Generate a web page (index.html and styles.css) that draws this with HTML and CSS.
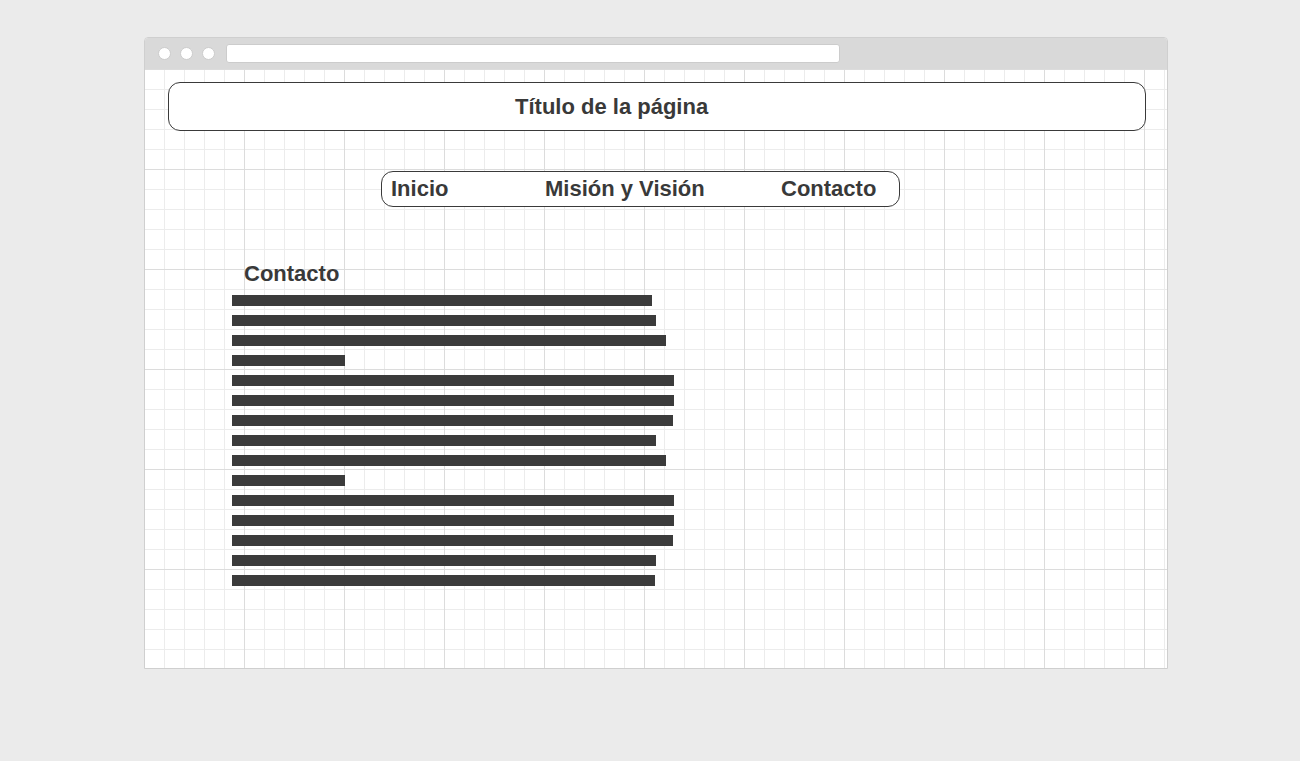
FILE: index.html
```html
<!DOCTYPE html>
<html lang="es">
<head>
<meta charset="utf-8">
<title>Contacto</title>
<link rel="stylesheet" href="styles.css">
</head>
<body>
<div class="window">
  <div class="chrome">
    <span class="dot"></span><span class="dot"></span><span class="dot"></span>
    <div class="address"></div>
  </div>
  <div class="content">
    <div class="title-box"><span class="title">Título de la página</span></div>
    <nav class="nav">
      <span class="nav-item">Inicio</span>
      <span class="nav-item">Misión y Visión</span>
      <span class="nav-item">Contacto</span>
    </nav>
    <section class="main">
      <h2 class="heading">Contacto</h2>
      <div class="lines">
        <div class="bar" style="width:420px"></div>
        <div class="bar" style="width:424px"></div>
        <div class="bar" style="width:434px"></div>
        <div class="bar" style="width:113px"></div>
        <div class="bar" style="width:442px"></div>
        <div class="bar" style="width:442px"></div>
        <div class="bar" style="width:441px"></div>
        <div class="bar" style="width:424px"></div>
        <div class="bar" style="width:434px"></div>
        <div class="bar" style="width:113px"></div>
        <div class="bar" style="width:442px"></div>
        <div class="bar" style="width:442px"></div>
        <div class="bar" style="width:441px"></div>
        <div class="bar" style="width:424px"></div>
        <div class="bar" style="width:423px"></div>
      </div>
    </section>
  </div>
</div>
</body>
</html>
```

FILE: styles.css
```css
* { box-sizing: border-box; }
html, body { margin: 0; padding: 0; }
body {
  background: #ebebeb;
  font-family: "Liberation Sans", Arial, sans-serif;
  color: #393939;
  width: 1300px;
  height: 761px;
  overflow: hidden;
}
.window {
  margin: 37px 0 0 144px;
  width: 1024px;
  height: 632px;
  border: 1px solid #cfcfcf;
  border-radius: 4px 4px 0 0;
  background: #ffffff;
  display: flex;
  flex-direction: column;
  overflow: hidden;
}
.chrome {
  height: 31px;
  background: #d9d9d9;
  display: flex;
  align-items: center;
  padding-left: 13px;
  flex: none;
}
.dot {
  width: 13px;
  height: 13px;
  border-radius: 50%;
  background: #ffffff;
  border: 1px solid #cccccc;
  margin-right: 9px;
}
.address {
  margin-left: 2px;
  width: 614px;
  height: 19px;
  background: #ffffff;
  border: 1px solid #cccccc;
  border-radius: 3px;
}
.content {
  flex: 1;
  background-color: #ffffff;
  background-image:
    linear-gradient(to right, #dcdcdc 1px, transparent 1px),
    linear-gradient(to bottom, #dcdcdc 1px, transparent 1px),
    linear-gradient(to right, #ececec 1px, transparent 1px),
    linear-gradient(to bottom, #ececec 1px, transparent 1px);
  background-size: 100px 100px, 100px 100px, 20px 20px, 20px 20px;
  background-position: -1px 0, -1px 0, -1px 0, -1px 0;
  padding-top: 13px;
}
.title-box {
  margin-left: 23px;
  width: 978px;
  height: 49px;
  border: 1px solid #3a3a3a;
  border-radius: 12px;
  background: #ffffff;
  display: flex;
  align-items: center;
  padding-left: 346px;
}
.title {
  font-size: 22px;
  font-weight: bold;
  line-height: 1;
}
.nav {
  margin: 40px 0 0 236px;
  width: 519px;
  height: 36px;
  border: 1px solid #3a3a3a;
  border-radius: 12px;
  background: #ffffff;
  display: grid;
  grid-template-columns: 154px 236px auto;
  align-items: center;
  padding-left: 9px;
}
.nav-item {
  font-size: 22px;
  font-weight: bold;
  line-height: 1;
}
.main {
  margin: 55px 0 0 87px;
}
.heading {
  margin: 0 0 0 12px;
  font-size: 22px;
  font-weight: bold;
  line-height: 24px;
}
.lines {
  margin-top: 9px;
  display: flex;
  flex-direction: column;
  gap: 9px;
}
.bar {
  height: 11px;
  background: #3b3b3b;
}
```
